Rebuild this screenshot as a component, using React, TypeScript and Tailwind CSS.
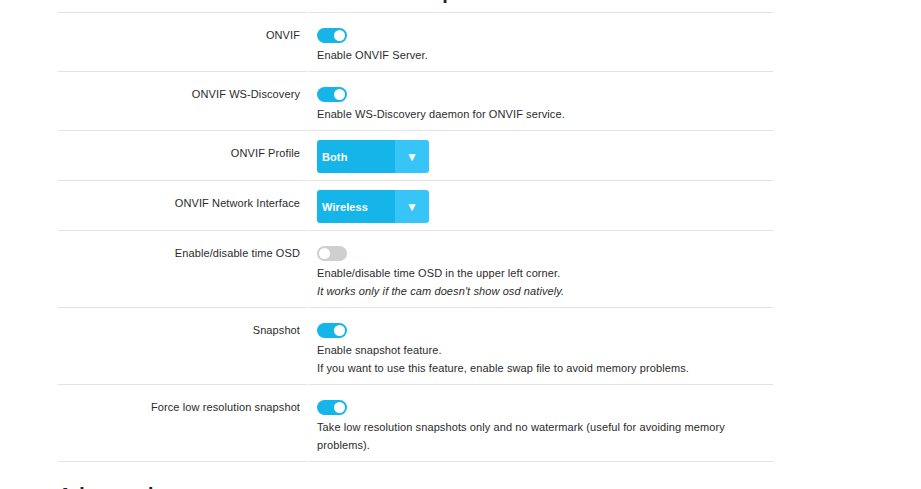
import type { ReactNode } from 'react';

type Row = {
  label: string;
  kind: 'toggle' | 'select';
  on?: boolean;
  value?: string;
  notes?: ReactNode[];
};

const rows: Row[] = [
  { label: 'ONVIF', kind: 'toggle', on: true, notes: ['Enable ONVIF Server.'] },
  {
    label: 'ONVIF WS-Discovery',
    kind: 'toggle',
    on: true,
    notes: ['Enable WS-Discovery daemon for ONVIF service.'],
  },
  { label: 'ONVIF Profile', kind: 'select', value: 'Both' },
  { label: 'ONVIF Network Interface', kind: 'select', value: 'Wireless' },
  {
    label: 'Enable/disable time OSD',
    kind: 'toggle',
    on: false,
    notes: [
      'Enable/disable time OSD in the upper left corner.',
      <i key="i">It works only if the cam doesn't show osd natively.</i>,
    ],
  },
  {
    label: 'Snapshot',
    kind: 'toggle',
    on: true,
    notes: [
      'Enable snapshot feature.',
      'If you want to use this feature, enable swap file to avoid memory problems.',
    ],
  },
  {
    label: 'Force low resolution snapshot',
    kind: 'toggle',
    on: true,
    notes: [
      'Take low resolution snapshots only and no watermark (useful for avoiding memory problems).',
    ],
  },
];

function Toggle({ on }: { on?: boolean }) {
  return (
    <div
      className={`flex h-[15px] w-[30px] items-center rounded-full px-[2px] ${
        on ? 'justify-end bg-[#15b5e9]' : 'justify-start bg-[#cfcfcf]'
      }`}
    >
      <div className="h-[11px] w-[11px] rounded-full bg-white" />
    </div>
  );
}

function Select({ value }: { value?: string }) {
  return (
    <div className="flex h-[33px] w-[112px] overflow-hidden rounded-[3px] text-white">
      <div className="flex flex-1 items-center bg-[#15b5e9] pl-[5px] font-bold">{value}</div>
      <div className="flex w-[34px] items-center justify-center bg-[#37c5f7] text-[12px]">▼</div>
    </div>
  );
}

function SettingRow({ row, first }: { row: Row; first: boolean }) {
  const line = first ? 'border-t border-b' : 'border-b';
  return (
    <div className="flex gap-px">
      <div className={`w-[250px] shrink-0 border-[#e3e3e3] pt-[13px] pr-[8px] text-right ${line}`}>
        {row.label}
      </div>
      <div className={`flex-1 border-[#e3e3e3] px-[8px] ${line}`}>
        {row.kind === 'toggle' ? (
          <div className="pt-[15px] pb-[7px]">
            <Toggle on={row.on} />
            <div className="mt-[3px]">
              {row.notes?.map((n, i) => (
                <div key={i}>{n}</div>
              ))}
            </div>
          </div>
        ) : (
          <div className="pt-[9px] pb-[7px]">
            <Select value={row.value} />
          </div>
        )}
      </div>
    </div>
  );
}

export default function App() {
  return (
    <div className="h-[489px] w-[921px] overflow-hidden bg-white font-['Liberation_Sans',Arial,sans-serif] text-[11px] leading-[18px] tracking-[0.1px] text-[#2b2b2b]">
      <div className="ml-[58px] w-[715px]">
        {/* tail of the section title above */}
        <div className="mt-[-20px] h-[24px] pl-[341px] text-[20px] leading-[24px] font-bold tracking-normal text-[#222]">
          Setup
        </div>
        <div className="mt-[8px]">
          {rows.map((row, i) => (
            <SettingRow key={row.label} row={row} first={i === 0} />
          ))}
        </div>
        <div className="mt-[21px] text-[20px] leading-[24px] font-bold tracking-normal text-[#222]">
          Advanced
        </div>
      </div>
    </div>
  );
}
